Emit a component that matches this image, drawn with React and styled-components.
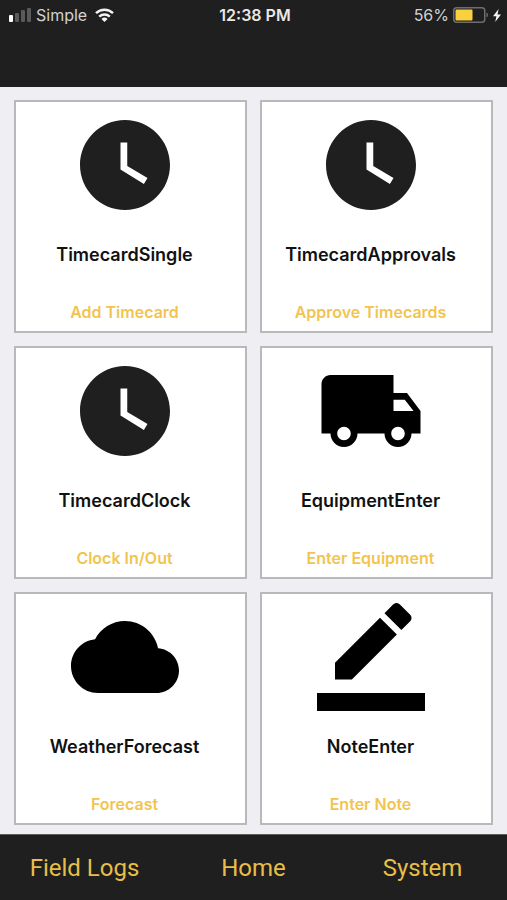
import React from 'react';
import styled, {createGlobalStyle, ThemeProvider} from 'styled-components';

const theme = {
  black: '#1f1f1f',
  yellow: '#e8be48',
  gold: '#f2c44f',
  grey: '#eeeef3',
  line: '#b9b9bc',
};

const GlobalStyle = createGlobalStyle`
  body {
    margin: 0;
    background: ${theme.grey};
    font-family: Inter, "Liberation Sans", sans-serif;
  }
`;

const Page = styled.div`
  display: flex;
  flex-direction: column;
  min-height: 100vh;
`;

const Header = styled.header`
  height: 87px;
  background: ${props => props.theme.black};
  color: #d2d2d2;
`;

const StatusBar = styled.div`
  display: grid;
  grid-template-columns: 1fr auto 1fr;
  align-items: center;
  height: 30px;
  padding: 0 6px 0 9px;
  font-size: 16px;
  line-height: 20px;
`;

const StatusGroup = styled.div`
  display: flex;
  align-items: center;
  justify-content: ${props => (props.$end ? 'flex-end' : 'flex-start')};
  gap: 4px;
`;

const Carrier = styled.span`
  margin-right: 4px;
`;

const Time = styled.time`
  color: #e8e8e8;
  font-weight: 600;
`;

const Main = styled.main`
  flex: 1;
  padding: 13px 14px 9px;
`;

const Grid = styled.div`
  display: grid;
  grid-template-columns: 1fr 1fr;
  gap: 13px;
`;

const Card = styled.button`
  display: flex;
  flex-direction: column;
  align-items: center;
  box-sizing: border-box;
  aspect-ratio: 1;
  padding: 9px 12px 9px 0;
  border: 2px solid ${props => props.theme.line};
  background: #fff;
  font-family: inherit;
  font-weight: 600;
  cursor: pointer;
`;

const CardIcon = styled.svg`
  width: 108px;
  height: 108px;
  fill: ${props => props.$color};
`;

const CardTitle = styled.span`
  margin-top: 24px;
  color: #111;
  font-size: 18px;
  line-height: 24px;
`;

const CardAction = styled.span`
  margin-top: auto;
  color: ${props => props.theme.gold};
  font-size: 16px;
  line-height: 20px;
`;

const Footer = styled.nav`
  display: flex;
  align-items: center;
  box-sizing: border-box;
  height: 66px;
  border-top: 1px solid #5c5c5c;
  background: ${props => props.theme.black};
`;

const FooterLink = styled.a`
  flex: 1;
  color: ${props => props.theme.yellow};
  font-family: Roboto, "Liberation Sans", sans-serif;
  font-size: 24px;
  line-height: 32px;
  text-align: center;
  text-decoration: none;
`;

const icons = {
  clock: 'M12 2C6.5 2 2 6.5 2 12s4.5 10 10 10 10-4.5 10-10S17.5 2 12 2zm4.2 14.2L11 13V7h1.5v5.2l4.5 2.7-.8 1.3z',
  truck: 'M20 8h-3V4H3c-1.1 0-2 .9-2 2v11h2c0 1.66 1.34 3 3 3s3-1.34 3-3h6c0 1.66 1.34 3 3 3s3-1.34 3-3h2v-5l-3-4zM6 18.5c-.83 0-1.5-.67-1.5-1.5s.67-1.5 1.5-1.5 1.5.67 1.5 1.5-.67 1.5-1.5 1.5zm13.5-9l1.96 2.5H17V9.5h2.5zm-1.5 9c-.83 0-1.5-.67-1.5-1.5s.67-1.5 1.5-1.5 1.5.67 1.5 1.5-.67 1.5-1.5 1.5z',
  cloud: 'M19.35 10.04C18.67 6.59 15.64 4 12 4 9.11 4 6.6 5.64 5.35 8.04 2.34 8.36 0 10.91 0 14c0 3.31 2.69 6 6 6h13c2.76 0 5-2.24 5-5 0-2.64-2.05-4.78-4.65-4.96z',
  note: 'M17.75 7L14 3.25l-10 10V17h3.75l10-10zm2.96-2.96c.39-.39.39-1.02 0-1.41L18.37.29c-.39-.39-1.02-.39-1.41 0L15 2.25 18.75 6l1.96-1.96zM0 20h24v4H0z',
};

const cards = [
  {title: 'TimecardSingle', action: 'Add Timecard', icon: 'clock', color: '#1f1f1f'},
  {title: 'TimecardApprovals', action: 'Approve Timecards', icon: 'clock', color: '#1f1f1f'},
  {title: 'TimecardClock', action: 'Clock In/Out', icon: 'clock', color: '#1f1f1f'},
  {title: 'EquipmentEnter', action: 'Enter Equipment', icon: 'truck', color: '#000'},
  {title: 'WeatherForecast', action: 'Forecast', icon: 'cloud', color: '#000'},
  {title: 'NoteEnter', action: 'Enter Note', icon: 'note', color: '#000'},
];

const Signal = () => (
  <svg width="23" height="14" viewBox="0 0 23 14" fill="#5a5a5a" aria-hidden="true">
    <rect x="0" y="7" width="4" height="7" rx="1" fill="#fff" />
    <rect x="6" y="5" width="4" height="9" rx="1" />
    <rect x="12" y="2" width="4" height="12" rx="1" />
    <rect x="18" y="0" width="4" height="14" rx="1" />
  </svg>
);

const Wifi = () => (
  <svg width="19" height="14" viewBox="0 0 19 14" fill="none" stroke="#f4f4f4" strokeWidth="2.4" aria-hidden="true">
    <path d="M1 5.2a12.2 12.2 0 0 1 17 0" />
    <path d="M4.2 8.6a7.6 7.6 0 0 1 10.6 0" />
    <path d="M9.5 14L6.4 10.9a4.5 4.5 0 0 1 6.2 0z" fill="#f4f4f4" stroke="none" />
  </svg>
);

const Battery = () => (
  <svg width="36" height="16" viewBox="0 0 36 16" aria-hidden="true">
    <rect x="0.75" y="0.75" width="31" height="14.5" rx="3" fill="none" stroke="#6e6e6e" strokeWidth="1.5" />
    <rect x="2.5" y="2.5" width="17" height="11" rx="1" fill="#fbd03f" />
    <path d="M33.5 5.5c2 .8 2 4.2 0 5z" fill="#6e6e6e" />
  </svg>
);

const Bolt = () => (
  <svg width="8" height="13" viewBox="0 0 8 13" fill="#f4f4f4" aria-hidden="true">
    <path d="M5.6 0L0 7.3h3.4L2.2 13 8 5.4H4.5z" />
  </svg>
);

const App = () => {
  return (
    <ThemeProvider theme={theme}>
      <GlobalStyle />
      <Page>
        <Header>
          <StatusBar>
            <StatusGroup>
              <Signal />
              <Carrier>Simple</Carrier>
              <Wifi />
            </StatusGroup>
            <Time>12:38 PM</Time>
            <StatusGroup $end>
              <span>56%</span>
              <Battery />
              <Bolt />
            </StatusGroup>
          </StatusBar>
        </Header>
        <Main>
          <Grid>
            {cards.map(card => (
              <Card type="button" key={card.title}>
                <CardIcon viewBox="0 0 24 24" $color={card.color} aria-hidden="true">
                  <path d={icons[card.icon]} />
                </CardIcon>
                <CardTitle>{card.title}</CardTitle>
                <CardAction>{card.action}</CardAction>
              </Card>
            ))}
          </Grid>
        </Main>
        <Footer>
          <FooterLink href="#logs">Field Logs</FooterLink>
          <FooterLink href="#home">Home</FooterLink>
          <FooterLink href="#system">System</FooterLink>
        </Footer>
      </Page>
    </ThemeProvider>
  );
};

export default App;
